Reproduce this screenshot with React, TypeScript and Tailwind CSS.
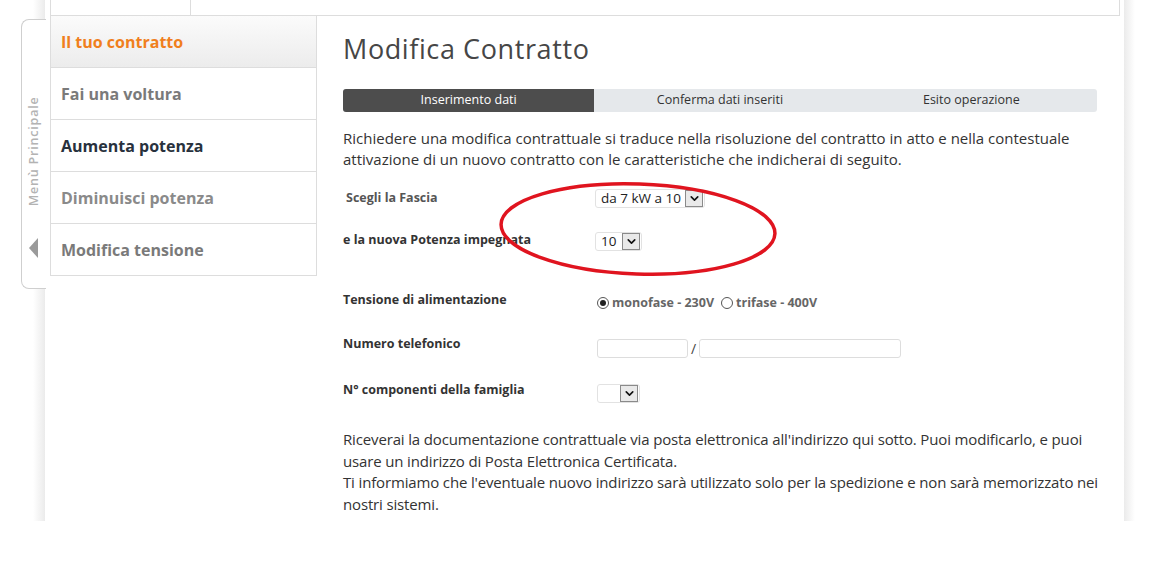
import { ChevronDown } from 'lucide-react';

const menu = [
  { label: 'Il tuo contratto', color: 'text-[#f07f1d]', active: true },
  { label: 'Fai una voltura', color: 'text-[#7a7a7a]' },
  { label: 'Aumenta potenza', color: 'text-[#28313d]' },
  { label: 'Diminuisci potenza', color: 'text-[#8a8a8a]' },
  { label: 'Modifica tensione', color: 'text-[#7a7a7a]' },
];

const steps = ['Inserimento dati', 'Conferma dati inseriti', 'Esito operazione'];

const FakeSelect = ({ value, width }: { value: string; width: string }) => (
  <div className={`flex h-[19px] ${width} items-center rounded-[3px] border border-[#e2e2e2] bg-white`}>
    <span className="flex-1 overflow-hidden whitespace-nowrap pl-[5px] text-[13.5px] font-normal leading-[17px] text-[#222]">
      {value}
    </span>
    <span className="mr-[1px] flex h-[17px] w-[18px] shrink-0 items-center justify-center border border-[#8a8a8a] bg-[#e9e9e9]">
      <ChevronDown className="h-[13px] w-[13px] text-[#111]" strokeWidth={3} />
    </span>
  </div>
);

const Radio = ({ checked }: { checked?: boolean }) => (
  <span className="flex h-[12px] w-[12px] items-center justify-center rounded-full border border-[#555] bg-white">
    {checked && <span className="h-[6px] w-[6px] rounded-full bg-[#222]" />}
  </span>
);

export default function App() {
  return (
    <div className="relative h-[565px] w-[1156px] overflow-hidden bg-white font-['Open_Sans',sans-serif] text-[#333]">
      <div className="ml-[33px] flex h-[521px]">
        <div className="w-[12px] bg-gradient-to-r from-white to-[#ebebeb]" />
        <div className="w-[1079px] bg-white pl-[5px]">
          <div className="flex h-[16px] w-[1070px] border-x border-b border-[#dddddd]">
            <div className="w-[140px] border-r border-[#dddddd]" />
          </div>

          <div className="flex items-start">
            <div className="w-[267px] border-x border-b border-[#dddddd]">
              {menu.map((m) => (
                <div
                  key={m.label}
                  className={`flex h-[52px] items-center border-b border-[#dddddd] pl-[10px] text-[16px] font-bold last:h-[51px] last:border-b-0 ${m.color} ${
                    m.active ? 'bg-gradient-to-b from-[#fbfbfb] to-[#ececec]' : 'bg-white'
                  }`}
                >
                  {m.label}
                </div>
              ))}
            </div>

            <div className="ml-[26px] w-[754px]">
              <h1 className="mt-[17px] h-[32px] text-[27px] font-normal leading-[32px] tracking-[0.6px] text-[#464646]">
                Modifica Contratto
              </h1>

              <div className="mt-[24px] grid h-[23px] grid-cols-3 overflow-hidden rounded-[3px] bg-[#e5e8eb] text-[12.5px]">
                {steps.map((s, i) => (
                  <div
                    key={s}
                    className={`flex items-center justify-center ${i === 0 ? 'bg-[#4d4d4d] text-white' : 'text-[#333]'}`}
                  >
                    {s}
                  </div>
                ))}
              </div>

              <p className="mt-[16px] text-[15px] leading-[21px] text-[#333]">
                Richiedere una modifica contrattuale si traduce nella risoluzione del contratto in atto e nella
                contestuale attivazione di un nuovo contratto con le caratteristiche che indicherai di seguito.
              </p>

              <div className="mt-[19px] text-[12.5px] font-bold leading-[18px]">
                <div className="flex h-[42px] items-start">
                  <span className="w-[252px] pl-[3px] text-[#555]">Scegli la Fascia</span>
                  <FakeSelect value="da 7 kW a 10 kW" width="w-[110px]" />
                </div>
                <div className="flex h-[60px] items-start">
                  <span className="w-[252px] text-[#333]">e la nuova Potenza impegnata</span>
                  <div className="mt-[1px]">
                    <FakeSelect value="10" width="w-[47px]" />
                  </div>
                </div>
                <div className="flex h-[44px] items-start">
                  <span className="w-[254px] text-[#333]">Tensione di alimentazione</span>
                  <div className="mt-[3px] flex items-center gap-[3px] text-[#666]">
                    <Radio checked />
                    <span className="mr-[4px]">monofase - 230V</span>
                    <Radio />
                    <span>trifase - 400V</span>
                  </div>
                </div>
                <div className="flex h-[46px] items-start">
                  <span className="w-[254px] text-[#333]">Numero telefonico</span>
                  <div className="mt-[4px] flex items-center">
                    <span className="h-[19px] w-[91px] rounded-[3px] border border-[#dddddd]" />
                    <span className="mx-[3px] text-[14px] font-normal leading-none text-[#444]">/</span>
                    <span className="h-[19px] w-[202px] rounded-[3px] border border-[#dddddd]" />
                  </div>
                </div>
                <div className="flex h-[48px] items-start">
                  <span className="w-[254px] text-[#333]">N° componenti della famiglia</span>
                  <div className="mt-[3px]">
                    <FakeSelect value="" width="w-[43px]" />
                  </div>
                </div>
              </div>

              <p className="w-[768px] text-[15px] leading-[21.7px] tracking-[-0.15px] text-[#333]">
                Riceverai la documentazione contrattuale via posta elettronica all'indirizzo qui sotto. Puoi
                modificarlo, e puoi usare un indirizzo di Posta Elettronica Certificata.
                <br />
                Ti informiamo che l'eventuale nuovo indirizzo sarà utilizzato solo per la spedizione e non sarà
                memorizzato nei nostri sistemi.
              </p>
            </div>
          </div>
        </div>
        <div className="w-[11px] bg-gradient-to-r from-[#ebebeb] to-white" />
      </div>

      {/* side tab */}
      <div className="absolute left-[21px] top-[19px] flex h-[270px] w-[25px] flex-col items-center rounded-l-[8px] border border-r-0 border-[#cfcfcf] bg-white">
        <div className="mt-[46px] flex h-[170px] items-center justify-center">
          <span className="-rotate-90 whitespace-nowrap text-[12.5px] font-semibold tracking-[0.8px] text-[#b3b3b3]">
            Menù Principale
          </span>
        </div>
        <svg className="mt-[2px]" width="10" height="20" viewBox="0 0 10 20">
          <polygon points="9,0 9,20 0,10" fill="#9a9a9a" />
        </svg>
      </div>

      {/* red hand-drawn circle */}
      <svg className="pointer-events-none absolute left-[490px] top-[175px]" width="300" height="110" viewBox="0 0 300 110">
        <ellipse cx="148" cy="54" rx="137" ry="45" fill="none" stroke="#e0141f" strokeWidth="3.5" transform="rotate(2 148 54)" />
      </svg>
    </div>
  );
}
